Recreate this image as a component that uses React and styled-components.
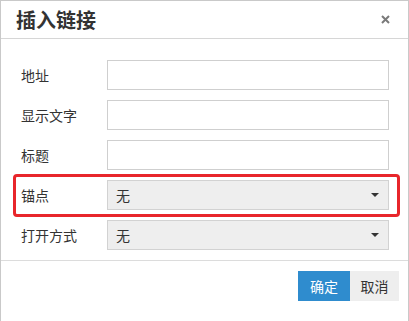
import React from "react";
import styled, { createGlobalStyle } from "styled-components";

const GlobalStyle = createGlobalStyle`
  html, body {
    margin: 0;
    padding: 0;
    background: #fff;
  }
  body {
    font-family: "Noto Sans CJK SC", "Noto Sans", sans-serif;
    color: #333;
  }
`;

const Dialog = styled.div`
  box-sizing: border-box;
  width: 409px;
  height: 321px;
  border: 1px solid #c9c9c9;
  border-bottom: none;
  background: #fff;
  display: flex;
  flex-direction: column;
`;

const Header = styled.div`
  height: 37px;
  border-bottom: 1px solid #d6d6d6;
  display: flex;
  align-items: center;
  justify-content: space-between;
  padding: 0 18px 0 15px;

  h3 {
    margin: 0;
    font-size: 20px;
    font-weight: 700;
    color: #333;
  }
`;

const Close = styled.button`
  border: none;
  background: none;
  padding: 0;
  width: 9px;
  height: 9px;
  display: flex;
  cursor: pointer;
`;

const Body = styled.div`
  flex: 1;
  padding: 21px 19px 0 19px;
  display: flex;
  flex-direction: column;
  gap: 10px;
  border-bottom: 1px solid #dcdcdc;
`;

const Row = styled.div`
  position: relative;
  display: flex;
  align-items: center;
  height: 30px;
`;

const Label = styled.label`
  width: 87px;
  font-size: 14px;
  color: #333;
  padding-left: 1px;
  box-sizing: border-box;
`;

const Input = styled.input`
  box-sizing: border-box;
  flex: 1;
  height: 30px;
  border: 1px solid #cfcfcf;
  background: #fff;
  outline: none;
`;

const Select = styled.div`
  box-sizing: border-box;
  flex: 1;
  height: 30px;
  border: 1px solid #d2d2d2;
  background: #eeeeee;
  display: flex;
  align-items: center;
  justify-content: space-between;
  padding: 0 9px 0 8px;
  font-size: 14px;
  color: #333;
`;

const Caret = styled.span`
  width: 0;
  height: 0;
  border-left: 4px solid transparent;
  border-right: 4px solid transparent;
  border-top: 4px solid #333;
`;

const Highlight = styled.div`
  position: absolute;
  top: -6px;
  bottom: -7px;
  left: -7px;
  right: -11px;
  border: 3px solid #e8262b;
  border-radius: 4px;
  pointer-events: none;
`;

const Footer = styled.div`
  height: 50px;
  display: flex;
  justify-content: flex-end;
  align-items: flex-start;
  padding: 10px 9px 0 0;
`;

const Button = styled.button`
  height: 30px;
  padding: 0 ${(p) => (p.$primary ? "12px" : "10.5px")};
  border: none;
  border-radius: 0;
  font-family: inherit;
  font-size: 14px;
  background: ${(p) => (p.$primary ? "#2f8cce" : "#eeeeee")};
  color: ${(p) => (p.$primary ? "#fff" : "#333")};
  cursor: pointer;
`;

const fields = [
  { label: "地址", type: "input" },
  { label: "显示文字", type: "input" },
  { label: "标题", type: "input" },
  { label: "锚点", type: "select", value: "无", marked: true },
  { label: "打开方式", type: "select", value: "无" },
];

export default function App() {
  return (
    <>
      <GlobalStyle />
      <Dialog>
        <Header>
          <h3>插入链接</h3>
          <Close aria-label="close">
            <svg width="9" height="9" viewBox="0 0 9 9">
              <path
                d="M1 1 L8 8 M8 1 L1 8"
                stroke="#7a7a7a"
                strokeWidth="2"
              />
            </svg>
          </Close>
        </Header>
        <Body>
          {fields.map((f) => (
            <Row key={f.label}>
              <Label>{f.label}</Label>
              {f.type === "input" ? (
                <Input />
              ) : (
                <Select>
                  <span>{f.value}</span>
                  <Caret />
                </Select>
              )}
              {f.marked && <Highlight />}
            </Row>
          ))}
        </Body>
        <Footer>
          <Button $primary>确定</Button>
          <Button>取消</Button>
        </Footer>
      </Dialog>
    </>
  );
}
